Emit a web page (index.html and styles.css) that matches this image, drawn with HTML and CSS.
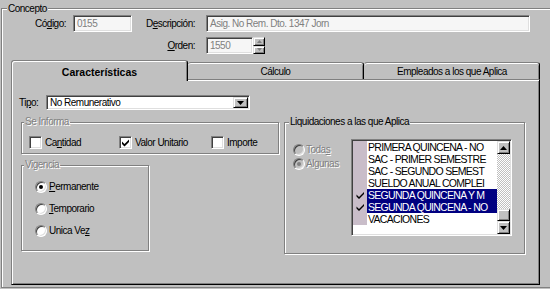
FILE: index.html
```html
<!DOCTYPE html>
<html lang="es">
<head>
	<meta charset="UTF-8">
	<title>Concepto</title>
	<link rel="stylesheet" href="styles.css">
</head>
<body>
	<div class="group concepto">
		<div class="group-title">Concepto</div>
		<div class="fields">
			<label class="lbl lbl-a">Có<u>d</u>igo:</label>
			<div class="edit">0155</div>
			<label class="lbl lbl-b">D<u>e</u>scripción:</label>
			<div class="edit">Asig. No Rem. Dto. 1347 Jorn</div>
			<label class="lbl lbl-b lbl-orden"><u>O</u>rden:</label>
			<div class="spin">
				<div class="edit edit-orden">1550</div>
				<div class="spin-btns">
					<span class="btn3d spin-btn"><svg width="5" height="3"><path d="M0 3h5L2.5 0z" fill="#808080"/></svg></span>
					<span class="btn3d spin-btn"><svg width="5" height="3"><path d="M0 0h5L2.5 3z" fill="#808080"/></svg></span>
				</div>
			</div>
		</div>

		<div class="tabs">
			<div class="tab active">Características</div>
			<div class="tab">Cálculo</div>
			<div class="tab tab-last">Empleados a los que Aplica</div>
		</div>

		<div class="panel">
			<div class="tipo">
				<label class="tipo-lbl">Ti<u>p</u>o:</label>
				<div class="select">
					<span class="select-text">No Remunerativo</span>
					<span class="btn3d select-btn"><svg width="7" height="4"><path d="M0 0h7L3.5 4z" fill="#000"/></svg></span>
				</div>
			</div>

			<div class="body-row">
				<div class="left-col">
					<div class="group informa">
						<div class="group-title off">Se Informa</div>
						<div class="checks">
							<div class="check-item w1"><span class="box"></span><span>Ca<u>n</u>tidad</span></div>
							<div class="check-item w2"><span class="box"><svg width="9" height="9"><path d="M1 3.5l2.5 2.5L8 1.5v2.5L3.5 8.5 1 6z" fill="#000"/></svg></span><span>Valor Unitario</span></div>
							<div class="check-item"><span class="box"></span><span>Importe</span></div>
						</div>
					</div>

					<div class="group vigencia">
						<div class="group-title off">Vigencia</div>
						<div class="radios">
							<div class="radio-item"><span class="radio on"></span><span><u>P</u>ermanente</span></div>
							<div class="radio-item"><span class="radio"></span><span><u>T</u>emporario</span></div>
							<div class="radio-item"><span class="radio"></span><span>Unica Ve<u>z</u></span></div>
						</div>
					</div>
				</div>

				<div class="group liquid">
					<div class="group-title">Liquidaciones a las que Aplica</div>
					<div class="liquid-row">
						<div class="liquid-radios">
							<div class="radio-item small off"><span class="radio dis"></span><span>Toda<u>s</u></span></div>
							<div class="radio-item small off"><span class="radio dis on"></span><span>Algunas</span></div>
						</div>
						<div class="listbox">
							<div class="items">
								<div class="item"><span class="chk"></span><span class="txt">PRIMERA QUINCENA - NO</span></div>
								<div class="item"><span class="chk"></span><span class="txt">SAC - PRIMER SEMESTRE</span></div>
								<div class="item"><span class="chk"></span><span class="txt">SAC - SEGUNDO SEMEST</span></div>
								<div class="item"><span class="chk"></span><span class="txt">SUELDO ANUAL COMPLEI</span></div>
								<div class="item sel"><span class="chk"><svg width="9" height="8"><path d="M0.5 3.5l2.5 2.5L8 1v2L3 8 0.5 5.5z" fill="#000"/></svg></span><span class="txt">SEGUNDA QUINCENA Y M</span></div>
								<div class="item sel"><span class="chk"><svg width="9" height="8"><path d="M0.5 3.5l2.5 2.5L8 1v2L3 8 0.5 5.5z" fill="#000"/></svg></span><span class="txt">SEGUNDA QUINCENA - NO</span></div>
								<div class="item"><span class="chk"></span><span class="txt">VACACIONES</span></div>
							</div>
							<div class="scrollbar">
								<span class="btn3d sb-btn"><svg width="7" height="4"><path d="M0 4h7L3.5 0z" fill="#000"/></svg></span>
								<div class="sb-track"><span class="btn3d sb-thumb"></span></div>
								<span class="btn3d sb-btn"><svg width="7" height="4"><path d="M0 0h7L3.5 4z" fill="#000"/></svg></span>
							</div>
						</div>
					</div>
				</div>
			</div>
		</div>
	</div>
</body>
</html>
```

FILE: styles.css
```css
html { background: #c0c0c0; }
body {
	margin: 0;
	overflow: hidden;
	color: #000;
	font: 10px/12px "Liberation Sans", Arial, sans-serif;
	letter-spacing: -0.5px;
}
* { box-sizing: border-box; }
u { text-underline-offset: 1px; }

/* etched group boxes */
.group {
	border: 1px solid #808080;
	box-shadow: inset 1px 1px 0 #fff, 1px 1px 0 #fff;
}
.group-title {
	display: table;
	margin: -7px 0 0 2px;
	padding: 0 1px;
	background: #c0c0c0;
	line-height: 12px;
}
.off { color: #808080; text-shadow: 1px 1px 0 #fff; }

/* raised buttons */
.btn3d {
	display: flex;
	align-items: center;
	justify-content: center;
	background: #c0c0c0;
	border: 1px solid;
	border-color: #dfdfdf #000 #000 #dfdfdf;
	box-shadow: inset 1px 1px 0 #fff, inset -1px -1px 0 #808080;
}
.btn3d svg { display: block; }

/* concepto */
.concepto {
	margin: 8px 0 0 1px;
	width: 560px;
	height: 280px;
}
.concepto > .group-title { margin: -6px 0 0 5px; }

.fields {
	display: grid;
	grid-template-columns: 71px 59px 74px 324px;
	grid-auto-rows: 17px;
	row-gap: 5px;
}
.lbl {
	align-self: center;
	text-align: right;
}
.lbl-a { padding-right: 7px; }
.lbl-b { padding-right: 11px; }
.lbl-orden { grid-column: 3; }
.edit {
	height: 17px;
	padding-left: 3px;
	line-height: 15px;
	color: #808080;
	background: #f6f6f6;
	border: 1px solid;
	border-color: #808080 #fff #fff #808080;
	box-shadow: inset 1px 1px 0 #404040, inset -1px -1px 0 #dfdfdf;
	white-space: nowrap;
	overflow: hidden;
}
.spin { display: flex; }
.edit-orden { width: 47px; }
.spin-btns {
	display: flex;
	flex-direction: column;
	width: 12px;
	height: 17px;
}
.spin-btn { height: 8.5px; }

/* tabs */
.tabs {
	display: flex;
	align-items: flex-end;
	height: 19px;
	margin: 6px 0 0 9px;
}
.tab {
	width: 176px;
	height: 17px;
	padding-top: 3px;
	text-align: center;
	line-height: 12px;
	background: #c0c0c0;
	border: 1px solid;
	border-bottom: 0;
	border-color: #808080 #000 transparent #808080;
	border-radius: 3px 3px 0 0;
	box-shadow: inset 1px 1px 0 #fff, inset -1px 0 0 #808080;
}
.tab.active {
	position: relative;
	z-index: 1;
	width: 177px;
	height: 21px;
	margin-bottom: -2px;
	padding-top: 5px;
	line-height: 13px;
	font-weight: bold;
	font-size: 10.5px;
	letter-spacing: 0;
}
.tab + .tab { border-left-color: transparent; box-shadow: inset 0 1px 0 #fff, inset -1px 0 0 #808080; }
.tab.active + .tab { border-left: 0; }

.panel {
	width: 529px;
	height: 206px;
	margin-left: 9px;
	padding-top: 15px;
	border: 1px solid;
	border-color: #808080 #000 #000 #808080;
	box-shadow: inset 1px 1px 0 #fff, inset -1px -1px 0 #808080;
}

/* tipo */
.tipo {
	display: flex;
	align-items: center;
	margin-left: 7px;
}
.tipo-lbl { width: 27px; }
.select {
	display: flex;
	align-items: center;
	width: 204px;
	height: 15px;
	padding: 0 1px 0 3px;
	background: #fff;
	border: 1px solid;
	border-color: #808080 #fff #fff #808080;
	box-shadow: inset 1px 1px 0 #404040, inset -1px -1px 0 #dfdfdf;
}
.select-text { flex: 1; }
.select-btn { width: 15px; height: 11px; }

.body-row {
	display: flex;
	gap: 5px;
	margin: 12px 0 0 9px;
}
.left-col { width: 258px; }

/* se informa */
.informa { height: 32px; }
.checks {
	display: flex;
	margin-top: 8px;
	padding-left: 7px;
}
.check-item {
	display: flex;
	align-items: center;
	gap: 3px;
	line-height: 13px;
}
.check-item.w1 { width: 90px; }
.check-item.w2 { width: 92px; }
.box {
	display: flex;
	align-items: center;
	justify-content: center;
	width: 13px;
	height: 13px;
	background: #fff;
	border: 1px solid;
	border-color: #808080 #fff #fff #808080;
	box-shadow: inset 1px 1px 0 #404040, inset -1px -1px 0 #dfdfdf;
}
.box svg { display: block; }

/* vigencia */
.vigencia {
	width: 128px;
	height: 86px;
	margin-top: 11px;
}
.radios {
	margin-top: 5px;
	padding-left: 13px;
}
.radio-item {
	display: flex;
	align-items: center;
	gap: 2px;
	height: 22px;
}
.radio-item.small { height: 14px; gap: 1px; }
.radio {
	display: flex;
	align-items: center;
	justify-content: center;
	width: 12px;
	height: 12px;
	border-radius: 50%;
	background: #fff;
	border: 1px solid;
	border-color: #808080 #fff #fff #808080;
	box-shadow: inset 1px 1px 0 #404040, inset -1px -1px 0 #dfdfdf;
}
.radio.on::after {
	content: "";
	width: 4px;
	height: 4px;
	border-radius: 50%;
	background: #000;
}
.radio.dis { background: #c0c0c0; }
.radio.dis.on::after { background: #808080; }

/* liquidaciones */
.liquid {
	width: 241px;
	height: 132px;
}
.liquid > .group-title { margin-left: 4px; }
.liquid-row {
	display: flex;
	margin-top: 11px;
	padding-left: 8px;
}
.liquid-radios {
	width: 58px;
	padding-top: 4px;
}
.listbox {
	display: flex;
	width: 161px;
	height: 97px;
	background: #fff;
	border: 1px solid;
	border-color: #808080 #fff #fff #808080;
	box-shadow: inset 1px 1px 0 #404040, inset -1px -1px 0 #dfdfdf;
	padding: 1px;
}
.items {
	flex: 1;
	min-width: 0;
	font: 10.5px/12px "Liberation Sans", sans-serif;
	letter-spacing: -0.7px;
}
.item { display: flex; height: 12px; }
.chk {
	display: flex;
	align-items: center;
	justify-content: center;
	width: 14px;
	background: #c9bdc9;
}
.chk svg { display: block; }
.txt {
	flex: 1;
	padding-left: 1px;
	white-space: nowrap;
	overflow: hidden;
}
.item.sel .txt { background: #000080; color: #fff; }
.scrollbar {
	display: flex;
	flex-direction: column;
	width: 13px;
}
.sb-btn { height: 13px; }
.sb-track {
	flex: 1;
	display: flex;
	flex-direction: column;
	justify-content: flex-end;
	background: repeating-conic-gradient(#fff 0 25%, #c0c0c0 0 50%) 0 0 / 2px 2px;
}
.sb-thumb { height: 12px; }
```
